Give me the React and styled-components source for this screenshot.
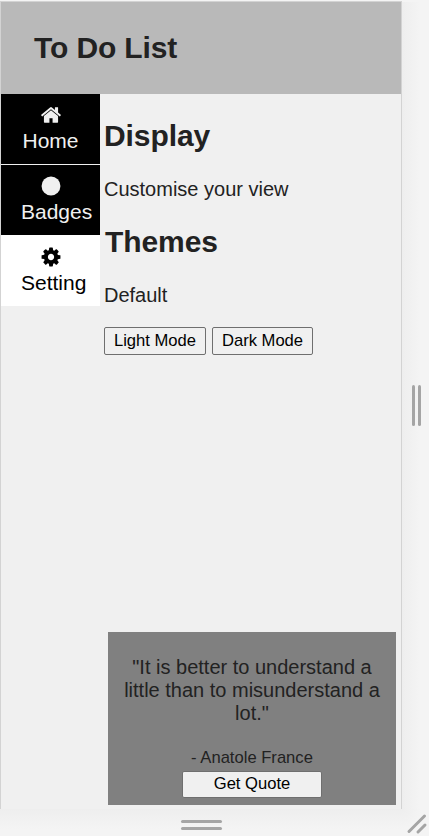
import React from "react";
import styled, { createGlobalStyle } from "styled-components";

const GlobalStyle = createGlobalStyle`
  * { box-sizing: border-box; }
  body {
    margin: 0;
    background: #f4f4f4;
    color: #222;
    font-family: "Liberation Sans", Arial, sans-serif;
    font-size: 20px;
    line-height: 23px;
    overflow: hidden;
  }
  button { font-family: inherit; }
`;

const Viewport = styled.div`
  display: grid;
  grid-template-columns: 402px 27px;
  grid-template-rows: 809px 27px;
  width: 429px;
  height: 836px;
`;

const Device = styled.div`
  display: flex;
  flex-direction: column;
  margin-top: 1px;
  border: 1px solid #d3d3d3;
  border-bottom: 0;
  background: #f0f0f0;
`;

const SideHandle = styled.div`
  display: flex;
  align-items: center;
  justify-content: center;
  gap: 3px;
  padding-left: 2px;
  margin-top: 2px;
  background: linear-gradient(to right, #eeeeee, #f4f4f4 18px);
`;

const BottomHandle = styled.div`
  display: flex;
  flex-direction: column;
  align-items: center;
  gap: 4px;
  padding-top: 11px;
  background: linear-gradient(to bottom, #eeeeee, #f4f4f4 20px);
`;

const Grip = styled.span`
  width: ${(p) => (p.$vertical ? "3px" : "41px")};
  height: ${(p) => (p.$vertical ? "41px" : "3px")};
  border-radius: 1.5px;
  background: #a5a5a5;
`;

const Corner = styled.div`
  display: flex;
  background: radial-gradient(circle at 0 0, #eeeeee, #f4f4f4 20px);
`;

const Header = styled.header`
  height: 92px;
  padding: 28px 0 0 33px;
  background: #b9b9b9;
`;

const Title = styled.h1`
  margin: 0;
  font-size: 30px;
  line-height: 35px;
  letter-spacing: -0.12px;
`;

const Body = styled.div`
  display: flex;
  flex: 1;
  min-height: 0;
`;

const Nav = styled.nav`
  display: flex;
  flex-direction: column;
  width: 99px;
  flex: none;
  gap: 1px;
`;

const NavItem = styled.a`
  display: flex;
  flex-direction: column;
  align-items: flex-start;
  height: 70px;
  padding: 10px 0 0 ${(p) => p.$indent || 20}px;
  background: ${(p) => (p.$active ? "#fff" : "#000")};
  color: ${(p) => (p.$active ? "#000" : "#f0f0f0")};
  font-size: 21px;
  line-height: 24px;

  &:last-child { height: 71px; margin-top: -1px; padding-top: 11px; }
`;

const NavIcon = styled.svg`
  width: 22px;
  height: 22px;
  margin: 0 0 3px ${(p) => p.$offset || 18.5}px;
  fill: currentColor;
`;

const Main = styled.main`
  display: flex;
  flex-direction: column;
  flex: 1;
  padding: 0 5px 4px 3px;
`;

const Heading = styled.h2`
  margin: 24px 0 0 1px;
  font-size: 30px;
  line-height: 35px;
  letter-spacing: -0.08px;
`;

const Text = styled.p`
  margin: 25px 0 0 1px;
`;

const ThemeHeading = styled(Heading)`
  margin: 23px 0 0 2px;
`;

const ButtonRow = styled.div`
  display: flex;
  gap: 6px;
  margin: 20px 0 0 1px;
`;

const Button = styled.button`
  width: ${(p) => p.$width}px;
  height: 28px;
  padding: 0 0 1px;
  border: 1px solid #6f6f6f;
  border-radius: 2px;
  background: #f0f0f0;
  color: #000;
  font-size: 16.6px;
  line-height: 18px;
`;

const QuoteCard = styled.section`
  display: flex;
  flex-direction: column;
  align-items: center;
  height: 173px;
  margin: auto 0 0 5px;
  padding: 24px 15px 0;
  background: #808080;
  text-align: center;
`;

const Quote = styled.p`
  margin: 0;
  white-space: pre-line;
`;

const Author = styled.span`
  margin: 22px 0 3px;
  font-size: 16.6px;
  line-height: 21px;
`;

const QuoteButton = styled(Button)`
  height: 27px;
  padding-bottom: 2px;
`;

const HOME =
  "M1472 992v480q0 26-19 45t-45 19h-384v-384h-256v384h-384q-26 0-45-19t-19-45v-480q0-1 .5-3t.5-3l575-474 575 474q1 2 1 6zm223-69l-62 74q-8 9-21 11h-3q-13 0-21-7l-692-577-692 577q-12 8-24 7-13-2-21-11l-62-74q-8-10-7-23.5t11-21.5l719-599q32-26 76-26t76 26l244 204v-195q0-14 9-23t23-9h192q14 0 23 9t9 23v408l219 182q10 8 11 21.5t-7 23.5z";
const GEAR =
  "M1152 896q0-106-75-181t-181-75-181 75-75 181 75 181 181 75 181-75 75-181zm512-109v222q0 12-8 23t-20 13l-185 28q-19 54-39 91 35 50 107 138 10 12 10 25t-9 23q-27 37-99 108t-94 71q-12 0-26-9l-138-108q-44 23-91 38-16 136-29 186-7 28-36 28h-222q-14 0-24.5-8.5t-11.5-21.5l-28-184q-49-16-90-37l-141 107q-10 9-25 9-14 0-25-11-126-114-165-168-7-10-7-23 0-12 8-23 15-21 51-66.5t54-70.5q-27-50-41-99l-183-27q-13-2-21-12.5t-8-23.5v-222q0-12 8-23t19-13l186-28q14-46 39-92-40-57-107-138-10-12-10-24 0-10 9-23 26-36 98.5-107.5t94.5-71.5q13 0 26 10l138 107q44-23 91-38 16-136 29-186 7-28 36-28h222q14 0 24.5 8.5t11.5 21.5l28 184q49 16 90 37l142-107q9-9 24-9 13 0 25 10 129 119 165 170 7 8 7 22 0 12-8 23-15 21-51 66.5t-54 70.5q26 50 41 98l183 28q13 2 21 12.5t8 23.5z";

export default function App() {
  return (
    <>
      <GlobalStyle />
      <Viewport>
        <Device>
          <Header>
            <Title>To Do List</Title>
          </Header>
          <Body>
            <Nav>
              <NavItem $indent={21.5}>
                <NavIcon viewBox="0 0 1792 1792" $offset={17}>
                  <path d={HOME} />
                </NavIcon>
                Home
              </NavItem>
              <NavItem>
                <NavIcon viewBox="0 0 1792 1792">
                  <circle cx="896" cy="896" r="768" />
                </NavIcon>
                Badges
              </NavItem>
              <NavItem $active>
                <NavIcon viewBox="0 0 1792 1792">
                  <path d={GEAR} />
                </NavIcon>
                Setting
              </NavItem>
            </Nav>
            <Main>
              <Heading>Display</Heading>
              <Text>Customise your view</Text>
              <ThemeHeading>Themes</ThemeHeading>
              <Text>Default</Text>
              <ButtonRow>
                <Button $width={102}>Light Mode</Button>
                <Button $width={101}>Dark Mode</Button>
              </ButtonRow>
              <QuoteCard>
                <Quote>"It is better to understand a little than to misunderstand a lot."</Quote>
                <Author>- Anatole France</Author>
                <QuoteButton $width={140}>Get Quote</QuoteButton>
              </QuoteCard>
            </Main>
          </Body>
        </Device>
        <SideHandle>
          <Grip $vertical />
          <Grip $vertical />
        </SideHandle>
        <BottomHandle>
          <Grip />
          <Grip />
        </BottomHandle>
        <Corner>
          <svg width="27" height="27" viewBox="0 0 27 27" stroke="#a5a5a5" strokeWidth="3" strokeLinecap="round">
            <path d="M7 22.5 22.5 7M16 23 23 16" />
          </svg>
        </Corner>
      </Viewport>
    </>
  );
}
